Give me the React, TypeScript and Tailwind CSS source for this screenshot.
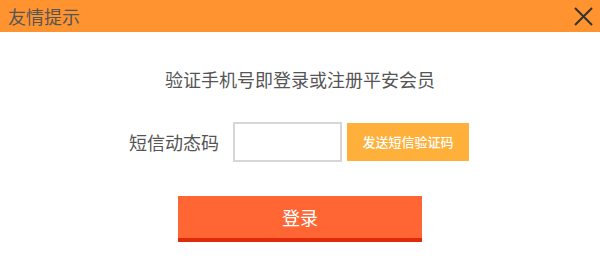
export default function App() {
  return (
    <div className="flex h-[268px] w-[600px] flex-col bg-white font-['Noto_Sans_CJK_SC',sans-serif]">
      {/* title bar */}
      <div className="flex h-[32px] shrink-0 items-center justify-between bg-[#ff9330] pl-[8px] pr-[7px]">
        <span className="text-[18px] leading-[24px] text-[#555]">友情提示</span>
        <svg width="19" height="19" viewBox="0 0 19 19" className="text-[#333]">
          <path d="M1 1 L18 18 M18 1 L1 18" stroke="currentColor" strokeWidth="2" fill="none" />
        </svg>
      </div>

      <p className="mt-[35px] text-center text-[18px] leading-[24px] text-[#555]">
        验证手机号即登录或注册平安会员
      </p>

      <div className="mt-[31px] flex items-center justify-center pr-[2px]">
        <span className="text-[18px] leading-[24px] text-[#555]">短信动态码</span>
        <input
          type="text"
          className="ml-[14px] h-[40px] w-[109px] border-2 border-[#d6d6d6] bg-white px-2 outline-none"
        />
        <button className="ml-[5px] h-[38px] w-[122px] bg-[#ffb03b] text-[13px] font-medium text-white">
          发送短信验证码
        </button>
      </div>

      <button className="mx-auto mt-[34px] h-[46px] w-[244px] border-b-4 border-[#e02a0a] bg-[#ff6633] text-[18px] text-white">
        登录
      </button>
    </div>
  );
}
